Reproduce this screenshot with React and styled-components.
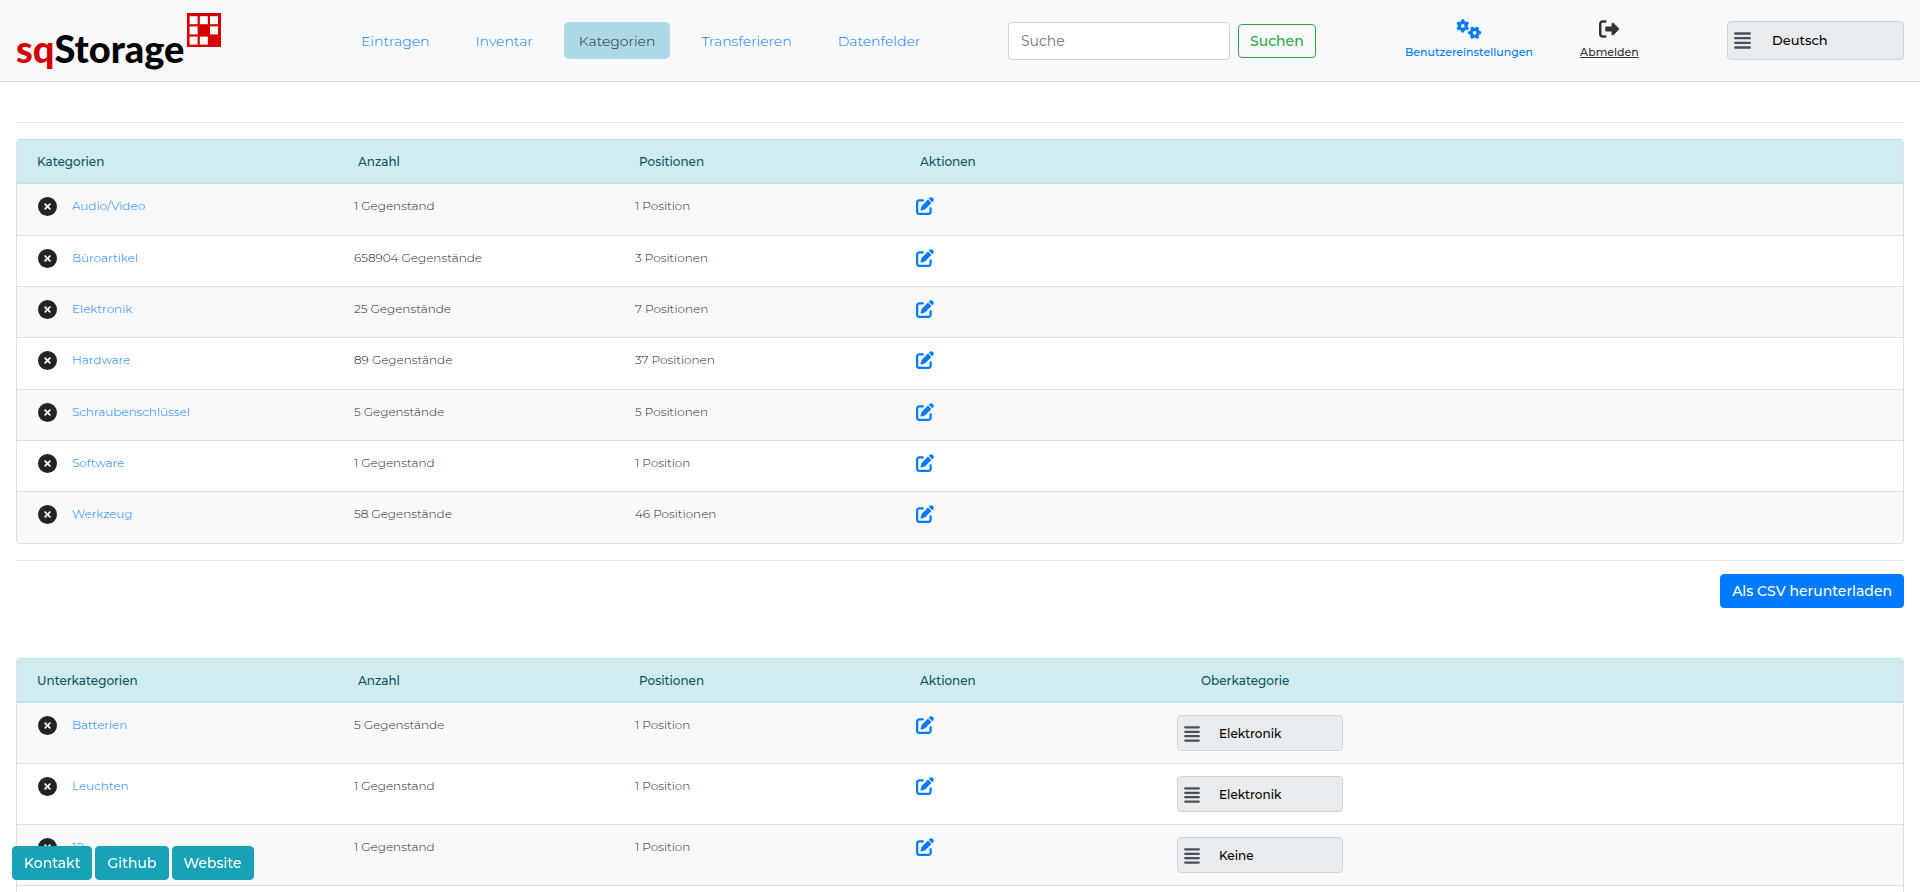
import React from 'react'
import styled, { createGlobalStyle } from 'styled-components'
import {
  FaCircleXmark,
  FaGears,
  FaPenToSquare,
  FaRightFromBracket
} from 'react-icons/fa6'

const navigation = ['Eintragen', 'Inventar', 'Kategorien', 'Transferieren', 'Datenfelder']

const categories = [
  { name: 'Audio/Video', amount: '1 Gegenstand', positions: '1 Position' },
  { name: 'Büroartikel', amount: '658904 Gegenstände', positions: '3 Positionen' },
  { name: 'Elektronik', amount: '25 Gegenstände', positions: '7 Positionen' },
  { name: 'Hardware', amount: '89 Gegenstände', positions: '37 Positionen' },
  { name: 'Schraubenschlüssel', amount: '5 Gegenstände', positions: '5 Positionen' },
  { name: 'Software', amount: '1 Gegenstand', positions: '1 Position' },
  { name: 'Werkzeug', amount: '58 Gegenstände', positions: '46 Positionen' }
]

const subCategories = [
  { name: 'Batterien', amount: '5 Gegenstände', positions: '1 Position', parent: 'Elektronik' },
  { name: 'Leuchten', amount: '1 Gegenstand', positions: '1 Position', parent: 'Elektronik' },
  { name: '10', amount: '1 Gegenstand', positions: '1 Position', parent: 'Keine' }
]

const parents = ['Keine', ...categories.map(category => category.name)]

const GlobalStyle = createGlobalStyle`
  *, *::before, *::after {
    box-sizing: border-box;
  }

  body {
    margin: 0;
    background: #fff;
    color: #212529;
    font-family: Montserrat, Inter, "Open Sans", sans-serif;
    font-size: 14px;
    line-height: 20px;
  }

  button, input, select {
    font: inherit;
  }
`

const Header = styled.header`
  display: grid;
  grid-template-columns: 330fr 662fr 397fr 322fr 177px;
  align-items: center;
  height: 82px;
  padding: 0 16px;
  background: #f8f9fa;
  border-bottom: 1px solid #d3d4d5;
`

const Brand = styled.a`
  display: flex;
  align-items: flex-start;
  gap: 3px;
  height: 56px;
  color: #000;
  font-family: Lato, sans-serif;
  font-size: 38px;
  font-weight: 900;
  line-height: 40px;
  text-decoration: none;
`

const BrandText = styled.span`
  padding-top: 15px;
`

const BrandAccent = styled.span`
  color: #d40000;
`

const Nav = styled.nav`
  display: flex;
  gap: 16px;
`

const NavLink = styled.a`
  padding: 9px 15px 8px;
  border-radius: 5px;
  background: ${props => (props.$active ? '#add8e6' : 'transparent')};
  color: ${props => (props.$active ? '#212529' : '#007bff')};
  font-size: 14px;
  font-weight: 300;
  line-height: 20px;
  text-decoration: none;
`

const SearchForm = styled.form`
  display: flex;
  align-items: center;
  gap: 8px;
`

const SearchInput = styled.input`
  width: 222px;
  height: 38px;
  padding: 0 12px;
  border: 1px solid #ced4da;
  border-radius: 4px;
  background: #fff;
  font-size: 14px;

  &::placeholder {
    color: #6c757d;
    opacity: 1;
  }
`

const colors = {
  primary: ['#007bff', '#007bff', '#fff'],
  info: ['#17a2b8', '#17a2b8', '#fff'],
  outline: ['transparent', '#28a745', '#28a745']
}

const Button = styled.button`
  height: 34px;
  padding: 0 11px;
  border: 1px solid ${props => colors[props.$kind][1]};
  border-radius: 4px;
  background: ${props => colors[props.$kind][0]};
  color: ${props => colors[props.$kind][2]};
  font-size: 14px;
  font-weight: 500;
`

const Account = styled.div`
  display: flex;
  gap: 47px;
  padding-bottom: 2px;
`

const AccountLink = styled.a`
  display: flex;
  flex-direction: column;
  align-items: center;
  gap: 5px;
  color: ${props => (props.$dark ? '#333' : '#007bff')};
  font-size: 11px;
  font-weight: 500;
  line-height: 16px;
  text-decoration: ${props => (props.$dark ? 'underline' : 'none')};

  svg {
    width: 26px;
    height: 20px;
  }
`

const Picker = styled.div`
  position: relative;
  width: ${props => (props.$large ? '177px' : '166px')};
  height: ${props => (props.$large ? '39px' : '36px')};

  svg {
    position: absolute;
    top: 11px;
    left: 7px;
    pointer-events: none;
  }
`

const PickerSelect = styled.select`
  appearance: none;
  width: 100%;
  height: 100%;
  padding: ${props => (props.$large ? '0 8px 2px 44px' : '2px 8px 0 41px')};
  border: 1px solid #ced4da;
  border-radius: 4px;
  background: #e9ecef;
  color: #000;
  font-size: ${props => (props.$large ? '13px' : '12px')};
  font-weight: 500;
`

const Content = styled.main`
  padding: 40px 16px 0;
`

const Divider = styled.hr`
  height: 1px;
  margin: 0;
  border: 0;
  background: #e5e5e5;
`

const Table = styled.table`
  width: 100%;
  margin: ${props => (props.$open ? '16px 0 0' : '16px 0')};
  table-layout: fixed;
  border: 1px solid #dfdfdf;
  border-width: ${props => (props.$open ? '0 1px' : '0 1px 1px')};
  border-collapse: separate;
  border-spacing: 0;
  border-radius: ${props => (props.$open ? '4px 4px 0 0' : '4px')};
  overflow: hidden;
`

const HeadCell = styled.th`
  width: ${props => (props.$width ? `${props.$width}px` : 'auto')};
  height: 45px;
  padding: 2px 0 0 ${props => props.$indent}px;
  border-top: 1px solid #bee5eb;
  border-bottom: 2px solid #c3e0e5;
  background: #d1ecf1;
  color: #0c5460;
  font-size: 12px;
  font-weight: 500;
  text-align: left;
`

// the dividers of the plain rows repeat every 154px, three rows at a time
const Row = styled.tr`
  height: ${props => (props.$tall ? '61px' : '51px')};

  &:nth-child(3n + 1):not(:last-child) {
    height: ${props => (props.$tall ? '61px' : '52px')};
  }

  &:nth-child(odd) {
    background: #f8f9fa;
  }
`

const Cell = styled.td`
  padding: 12px 0 0;
  border-bottom: 1px solid #dfdfdf;
  color: #212529;
  font-size: 12px;
  font-weight: 300;
  vertical-align: top;

  tr:last-child > & {
    border-bottom: ${props => (props.$open ? '1px solid #dfdfdf' : '0')};
  }
`

const TableEnd = styled.td`
  height: 7px;
  padding: 0;
`

const NameGroup = styled.div`
  display: flex;
  gap: 15px;
  padding-left: 21px;
`

const IconButton = styled.button`
  display: flex;
  padding: 1px 0 0;
  border: 0;
  background: none;
  color: ${props => (props.$edit ? '#007bff' : '#212529')};
`

const NameLink = styled.a`
  color: #007bff;
  text-decoration: none;
`

const Actions = styled.div`
  display: flex;
  justify-content: flex-end;
  padding: 13px 0 34px;
`

const Footer = styled.footer`
  position: fixed;
  bottom: 12px;
  left: 12px;
  display: flex;
  gap: 3px;
`

const squares = [[0, 0], [1, 0], [2, 0], [0, 1], [2, 1], [0, 2], [1, 2]]

const LogoMark = () => (
  <svg width="34" height="34" viewBox="0 0 34 34" aria-hidden="true">
    <path fill="#d40000" d="M0 0h34v34H0z" />
    {squares.map(([x, y]) => (
      <rect
        key={`${x}${y}`}
        x={2.6 + x * 10.2}
        y={3.2 + y * 10.2}
        width="8"
        height="8"
        fill="#fff"
      />
    ))}
  </svg>
)

const BarsIcon = ({ size }) => (
  <svg width={size} height={size} viewBox="0 0 16 16" aria-hidden="true">
    <path
      d="M1.2 1.4h13.6M1.2 5.8h13.6M1.2 10.2h13.6M1.2 14.6h13.6"
      stroke="#495057"
      strokeWidth="2.2"
      strokeLinecap="round"
    />
  </svg>
)

const Select = ({ label, options, value, large }) => (
  <Picker $large={large}>
    <BarsIcon size={large ? 17 : 16} />
    <PickerSelect aria-label={label} defaultValue={value} $large={large}>
      {options.map(option => <option key={option}>{option}</option>)}
    </PickerSelect>
  </Picker>
)

const CategoryTable = ({ title, items, nested }) => (
  <Table $open={nested}>
    <thead>
      <tr>
        <HeadCell $width={337} $indent={20}>{title}</HeadCell>
        <HeadCell $width={281} $indent={4}>Anzahl</HeadCell>
        <HeadCell $width={281} $indent={4}>Positionen</HeadCell>
        <HeadCell $width={261} $indent={4}>Aktionen</HeadCell>
        <HeadCell $indent={24}>{nested && 'Oberkategorie'}</HeadCell>
      </tr>
    </thead>
    <tbody>
      {items.map(item => (
        <Row key={item.name} $tall={nested}>
          <Cell $open={nested}>
            <NameGroup>
              <IconButton aria-label={`${item.name} löschen`}>
                <FaCircleXmark size={19} />
              </IconButton>
              <NameLink href="#">{item.name}</NameLink>
            </NameGroup>
          </Cell>
          <Cell $open={nested}>{item.amount}</Cell>
          <Cell $open={nested}>{item.positions}</Cell>
          <Cell $open={nested}>
            <IconButton $edit aria-label={`${item.name} bearbeiten`}>
              <FaPenToSquare size={18} />
            </IconButton>
          </Cell>
          <Cell $open={nested}>
            {nested && (
              <Select
                label={`Oberkategorie von ${item.name}`}
                options={parents}
                value={item.parent}
              />
            )}
          </Cell>
        </Row>
      ))}
    </tbody>
    {nested && (
      <tfoot>
        <tr><TableEnd colSpan={5} /></tr>
      </tfoot>
    )}
  </Table>
)

const App = () => (
  <>
    <GlobalStyle />
    <Header>
      <Brand href="#">
        <BrandText><BrandAccent>sq</BrandAccent>Storage</BrandText>
        <LogoMark />
      </Brand>
      <Nav>
        {navigation.map(item => (
          <NavLink key={item} href="#" $active={item === 'Kategorien'}>{item}</NavLink>
        ))}
      </Nav>
      <SearchForm>
        <SearchInput type="search" placeholder="Suche" aria-label="Suche" />
        <Button type="submit" $kind="outline">Suchen</Button>
      </SearchForm>
      <Account>
        <AccountLink href="#"><FaGears />Benutzereinstellungen</AccountLink>
        <AccountLink href="#" $dark><FaRightFromBracket />Abmelden</AccountLink>
      </Account>
      <Select label="Sprache" options={['Deutsch', 'English']} value="Deutsch" large />
    </Header>
    <Content>
      <Divider />
      <CategoryTable title="Kategorien" items={categories} />
      <Divider />
      <Actions>
        <Button $kind="primary">Als CSV herunterladen</Button>
      </Actions>
      <CategoryTable title="Unterkategorien" items={subCategories} nested />
    </Content>
    <Footer>
      <Button $kind="info">Kontakt</Button>
      <Button $kind="info">Github</Button>
      <Button $kind="info">Website</Button>
    </Footer>
  </>
)

export default App
